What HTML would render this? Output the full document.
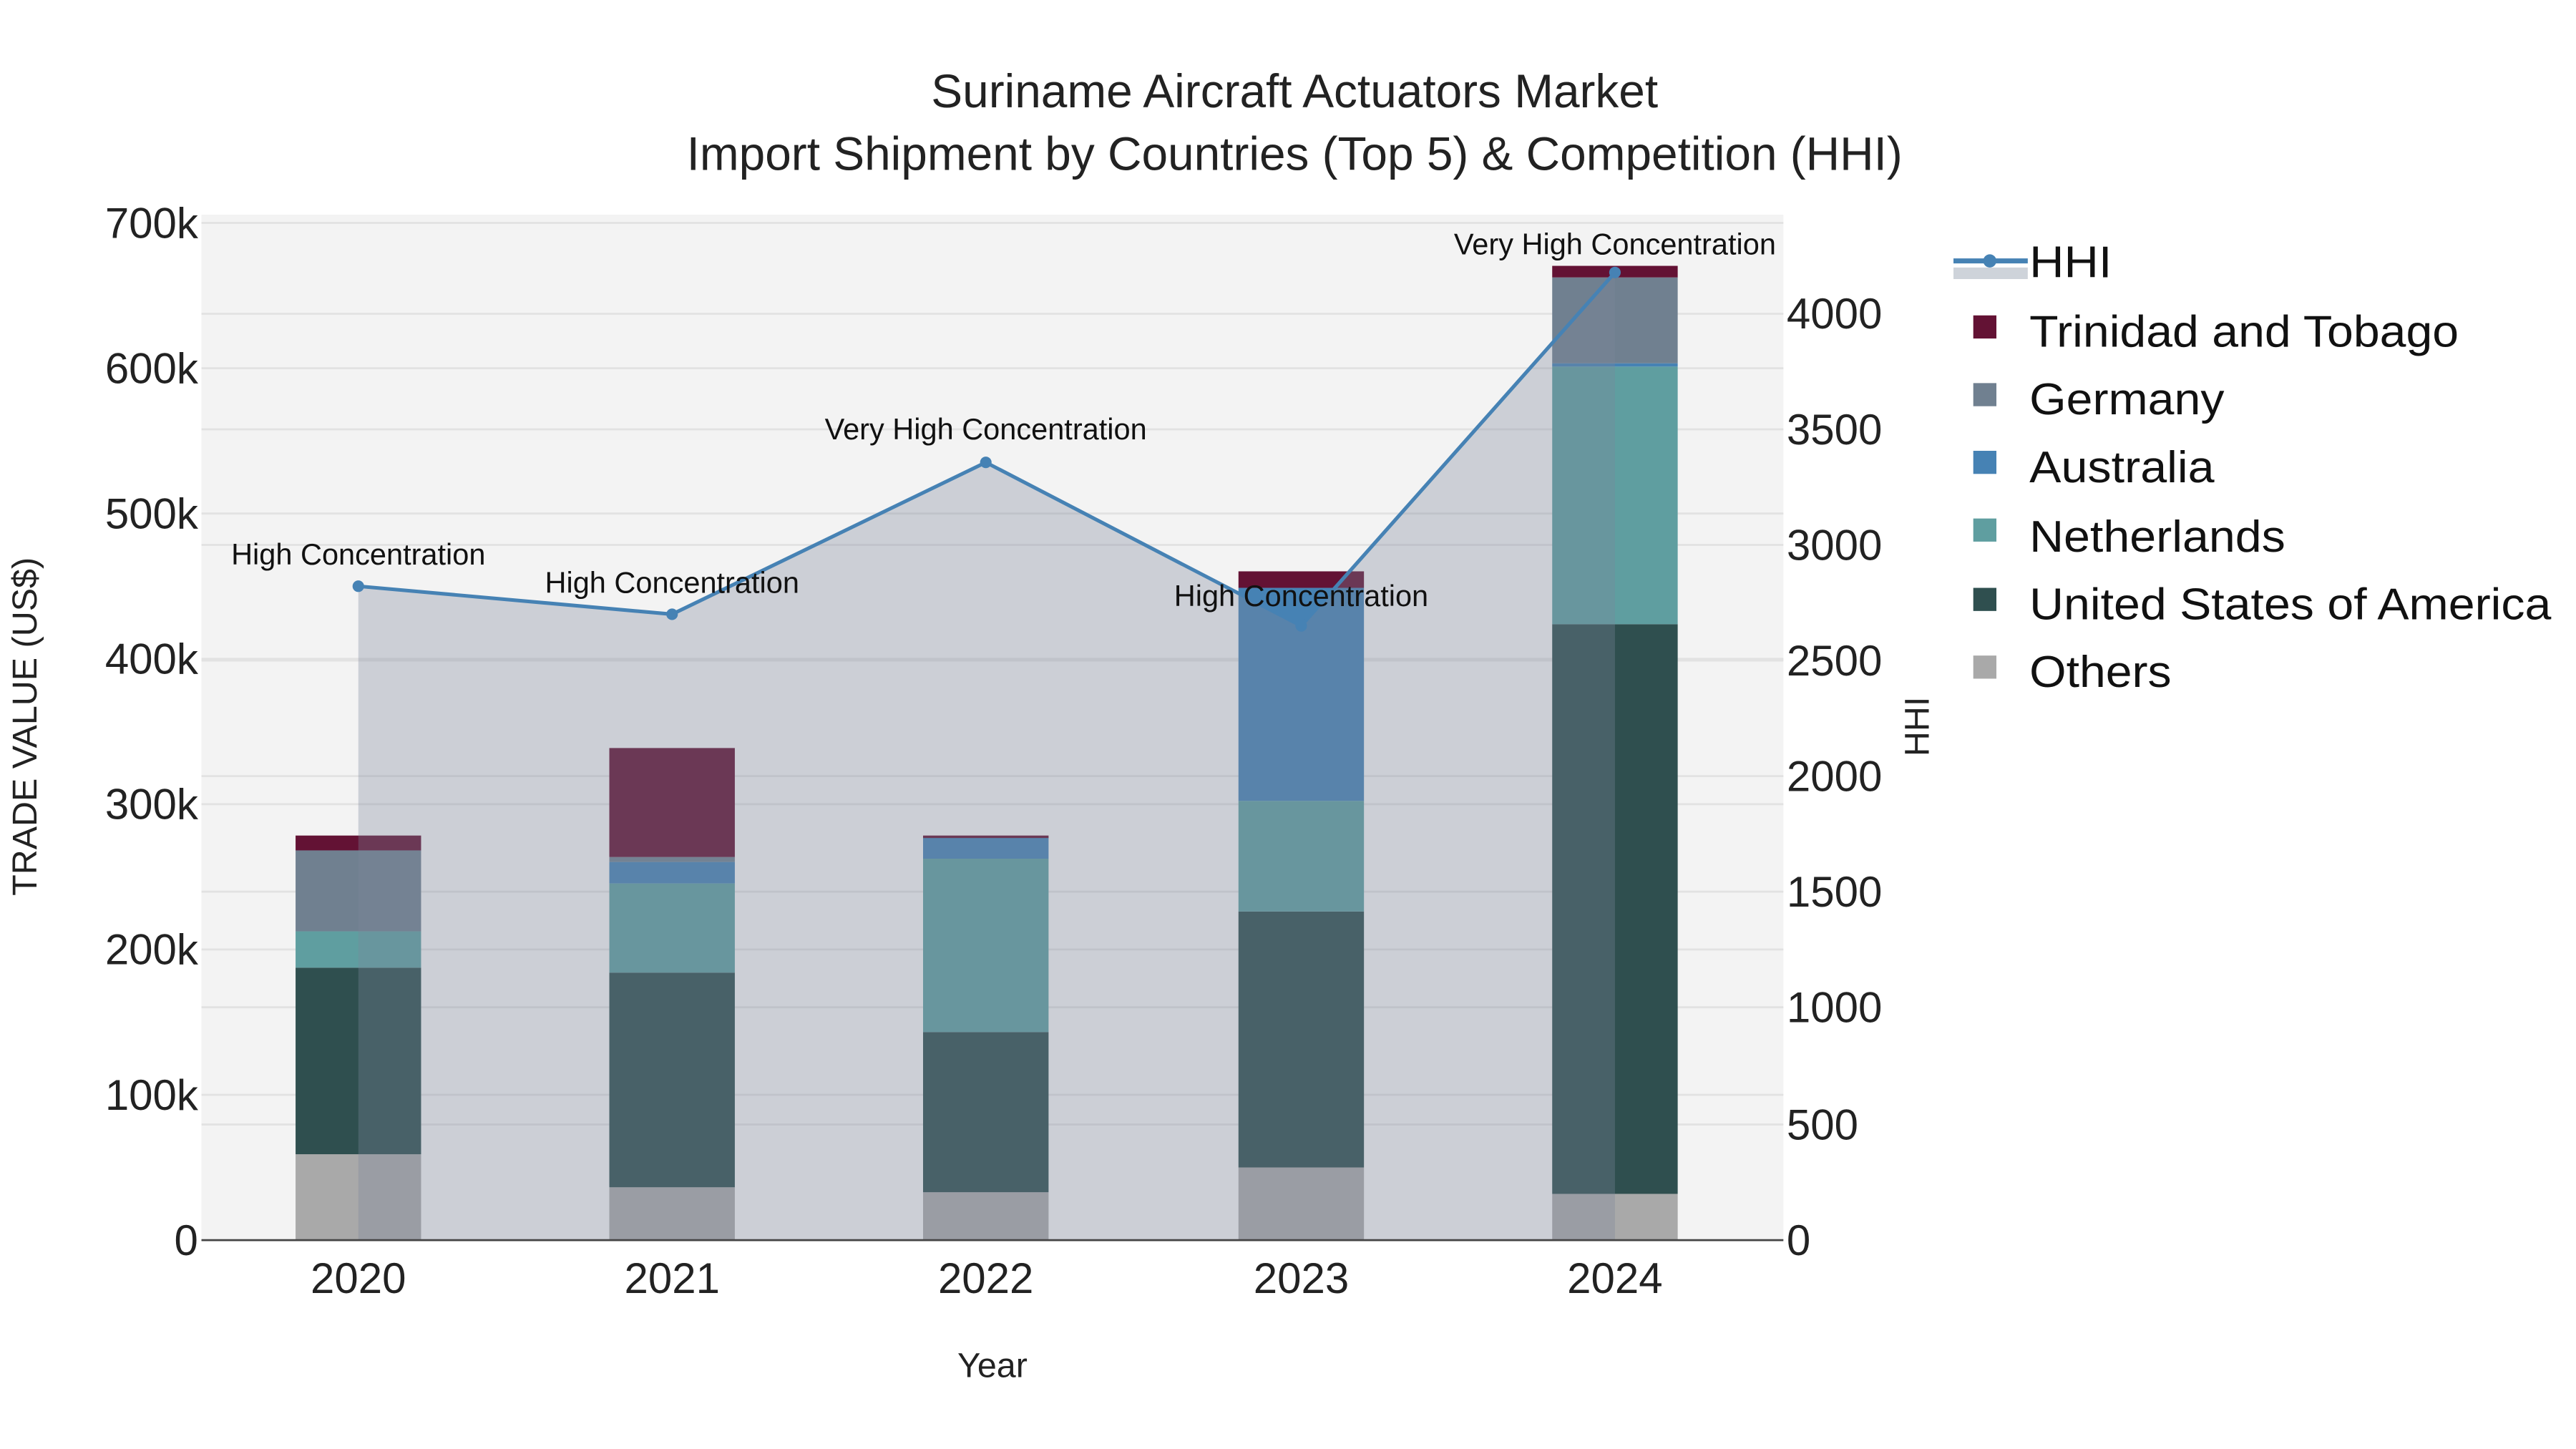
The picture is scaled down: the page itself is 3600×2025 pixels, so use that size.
<!DOCTYPE html>
<html><head><meta charset="utf-8"><style>
html,body{margin:0;padding:0;background:#fff;}
svg{display:block;font-family:"Liberation Sans",sans-serif;}
</style></head><body>
<svg width="3600" height="2025" viewBox="0 0 1560 877.5" xmlns="http://www.w3.org/2000/svg">
<rect width="1560" height="877.5" fill="#fff"/>
<rect x="122" y="130" width="958" height="621" fill="#f3f3f3"/>
<g stroke="#e2e2e2" stroke-width="1.2">
<line x1="122" x2="1080" y1="135" y2="135"/><line x1="122" x2="1080" y1="223" y2="223"/>
<line x1="122" x2="1080" y1="311" y2="311"/><line x1="122" x2="1080" y1="399" y2="399"/>
<line x1="122" x2="1080" y1="487" y2="487"/><line x1="122" x2="1080" y1="575" y2="575"/>
<line x1="122" x2="1080" y1="663" y2="663"/>
<line x1="122" x2="1080" y1="190" y2="190"/><line x1="122" x2="1080" y1="260" y2="260"/>
<line x1="122" x2="1080" y1="330" y2="330"/><line x1="122" x2="1080" y1="400" y2="400"/>
<line x1="122" x2="1080" y1="470" y2="470"/><line x1="122" x2="1080" y1="540" y2="540"/>
<line x1="122" x2="1080" y1="610" y2="610"/><line x1="122" x2="1080" y1="681" y2="681"/>
</g>
<g>
<rect x="179" y="699" width="76" height="52" fill="#a9a9a9"/>
<rect x="179" y="586" width="76" height="113" fill="#2f4f4f"/>
<rect x="179" y="564" width="76" height="22" fill="#5f9ea0"/>
<rect x="179" y="515" width="76" height="49" fill="#708090"/>
<rect x="179" y="506" width="76" height="9" fill="#631234"/>
<rect x="369" y="719" width="76" height="32" fill="#a9a9a9"/>
<rect x="369" y="589" width="76" height="130" fill="#2f4f4f"/>
<rect x="369" y="535" width="76" height="54" fill="#5f9ea0"/>
<rect x="369" y="522" width="76" height="13" fill="#4682b4"/>
<rect x="369" y="519" width="76" height="3" fill="#708090"/>
<rect x="369" y="453" width="76" height="66" fill="#631234"/>
<rect x="559" y="722" width="76" height="29" fill="#a9a9a9"/>
<rect x="559" y="625" width="76" height="97" fill="#2f4f4f"/>
<rect x="559" y="520" width="76" height="105" fill="#5f9ea0"/>
<rect x="559" y="507" width="76" height="13" fill="#4682b4"/>
<rect x="559" y="506" width="76" height="1.5" fill="#631234"/>
<rect x="750" y="707" width="76" height="44" fill="#a9a9a9"/>
<rect x="750" y="552" width="76" height="155" fill="#2f4f4f"/>
<rect x="750" y="485" width="76" height="67" fill="#5f9ea0"/>
<rect x="750" y="356" width="76" height="129" fill="#4682b4"/>
<rect x="750" y="346" width="76" height="10" fill="#631234"/>
<rect x="940" y="723" width="76" height="28" fill="#a9a9a9"/>
<rect x="940" y="378" width="76" height="345" fill="#2f4f4f"/>
<rect x="940" y="222" width="76" height="156" fill="#5f9ea0"/>
<rect x="940" y="220" width="76" height="2" fill="#4682b4"/>
<rect x="940" y="168" width="76" height="52" fill="#708090"/>
<rect x="940" y="161" width="76" height="7" fill="#631234"/>
</g>
<polygon points="217,355 407,372 597,280 788,379 978,165 978,751 217,751" fill="rgb(125,135,155)" fill-opacity="0.33"/>
<polyline points="217,355 407,372 597,280 788,379 978,165" fill="none" stroke="#4682b4" stroke-width="2.2"/>
<g fill="#4682b4"><circle cx="217" cy="355" r="3.5"/><circle cx="407" cy="372" r="3.5"/><circle cx="597" cy="280" r="3.5"/><circle cx="788" cy="379" r="3.5"/><circle cx="978" cy="165" r="3.5"/></g>
<line x1="122" x2="1080" y1="751" y2="751" stroke="#444" stroke-width="1.2"/>
<g font-size="18" fill="#111" text-anchor="middle">
<text x="217" y="342">High Concentration</text>
<text x="407" y="359">High Concentration</text>
<text x="597" y="266">Very High Concentration</text>
<text x="788" y="367">High Concentration</text>
<text x="978" y="154">Very High Concentration</text>
</g>
<g font-size="28.5" fill="#222" text-anchor="middle">
<text x="784" y="65">Suriname Aircraft Actuators Market</text>
<text x="784" y="103">Import Shipment by Countries (Top 5) &amp; Competition (HHI)</text>
</g>
<g font-size="26" fill="#222" text-anchor="end">
<text x="120" y="144">700k</text><text x="120" y="232">600k</text><text x="120" y="320">500k</text>
<text x="120" y="408">400k</text><text x="120" y="496">300k</text><text x="120" y="584">200k</text>
<text x="120" y="672">100k</text><text x="120" y="760">0</text>
</g>
<g font-size="26" fill="#222" text-anchor="start">
<text x="1082" y="199">4000</text><text x="1082" y="269">3500</text><text x="1082" y="339">3000</text>
<text x="1082" y="409">2500</text><text x="1082" y="479">2000</text><text x="1082" y="549">1500</text>
<text x="1082" y="619">1000</text><text x="1082" y="690">500</text><text x="1082" y="760">0</text>
</g>
<g font-size="26" fill="#222" text-anchor="middle">
<text x="217" y="783">2020</text><text x="407" y="783">2021</text><text x="597" y="783">2022</text>
<text x="788" y="783">2023</text><text x="978" y="783">2024</text>
</g>
<text x="601" y="834" font-size="21" fill="#222" text-anchor="middle">Year</text>
<text transform="translate(22,440) rotate(-90)" font-size="21" fill="#222" text-anchor="middle">TRADE VALUE (US$)</text>
<text transform="translate(1168,440) rotate(-90)" font-size="21" fill="#222" text-anchor="middle">HHI</text>
<rect x="1183" y="162" width="45" height="7" fill="#ced3da"/>
<line x1="1183" x2="1228" y1="158" y2="158" stroke="#4682b4" stroke-width="3"/>
<circle cx="1205" cy="158" r="4" fill="#4682b4"/>
<rect x="1195" y="191" width="14" height="14" fill="#631234"/>
<rect x="1195" y="232" width="14" height="14" fill="#708090"/>
<rect x="1195" y="273" width="14" height="14" fill="#4682b4"/>
<rect x="1195" y="314" width="14" height="14" fill="#5f9ea0"/>
<rect x="1195" y="356" width="14" height="14" fill="#2f4f4f"/>
<rect x="1195" y="397" width="14" height="14" fill="#a9a9a9"/>
<g font-size="27" fill="#111">
<text x="1229" y="168" textLength="50" lengthAdjust="spacingAndGlyphs">HHI</text>
<text x="1229" y="210" textLength="260" lengthAdjust="spacingAndGlyphs">Trinidad and Tobago</text>
<text x="1229" y="251" textLength="118" lengthAdjust="spacingAndGlyphs">Germany</text>
<text x="1229" y="292" textLength="112" lengthAdjust="spacingAndGlyphs">Australia</text>
<text x="1229" y="334" textLength="155" lengthAdjust="spacingAndGlyphs">Netherlands</text>
<text x="1229" y="375" textLength="316" lengthAdjust="spacingAndGlyphs">United States of America</text>
<text x="1229" y="416" textLength="86" lengthAdjust="spacingAndGlyphs">Others</text>
</g>
</svg>
</body></html>
